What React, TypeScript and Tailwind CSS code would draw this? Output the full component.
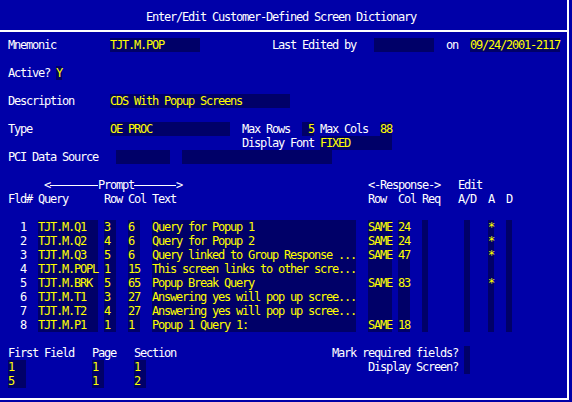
import type { ReactNode } from 'react';
import clsx from 'clsx';

type CellProps = { className?: string; children?: ReactNode };

// plain label text on the screen background
function Lbl({ className, children }: CellProps) {
  return <div className={clsx('text-white', className)}>{children}</div>;
}

// input field: dark cell with yellow value
function Fld({ className, children }: CellProps) {
  return <div className={clsx('bg-[#000068] text-[#ffff00]', className)}>{children}</div>;
}

type Row = {
  n: string;
  q: string;
  r: string;
  c: string;
  t: string;
  rr: string;
  rc: string;
  a: boolean;
};

const rows: Row[] = [
  { n: '1', q: 'TJT.M.Q1', r: '3', c: '6', t: 'Query for Popup 1', rr: 'SAME', rc: '24', a: true },
  { n: '2', q: 'TJT.M.Q2', r: '4', c: '6', t: 'Query for Popup 2', rr: 'SAME', rc: '24', a: true },
  { n: '3', q: 'TJT.M.Q3', r: '5', c: '6', t: 'Query linked to Group Response ...', rr: 'SAME', rc: '47', a: true },
  { n: '4', q: 'TJT.M.POPL', r: '1', c: '15', t: 'This screen links to other scre...', rr: '', rc: '', a: false },
  { n: '5', q: 'TJT.M.BRK', r: '5', c: '65', t: 'Popup Break Query', rr: 'SAME', rc: '83', a: true },
  { n: '6', q: 'TJT.M.T1', r: '3', c: '27', t: 'Answering yes will pop up scree...', rr: '', rc: '', a: false },
  { n: '7', q: 'TJT.M.T2', r: '4', c: '27', t: 'Answering yes will pop up scree...', rr: '', rc: '', a: false },
  { n: '8', q: 'TJT.M.P1', r: '1', c: '1', t: 'Popup 1 Query 1:', rr: 'SAME', rc: '18', a: false },
];

const rowStart = [
  'row-start-16',
  'row-start-17',
  'row-start-18',
  'row-start-19',
  'row-start-20',
  'row-start-21',
  'row-start-22',
  'row-start-23',
];

export default function App() {
  return (
    <div className="w-[572px] h-[402px] bg-[#0000a8] overflow-hidden">
      <div className="w-[569px] h-[400px] border-r-2 border-b-2 border-white pt-[10px] pl-[2px] font-['DejaVu_Sans_Mono',monospace] text-[12px] leading-[14px] tracking-[-1.224px] whitespace-pre">
        <div className="grid grid-cols-[repeat(94,6px)] grid-rows-[repeat(27,14px)]">
          {/* header */}
          <Lbl className="row-start-1 col-start-25">Enter/Edit Customer-Defined Screen Dictionary</Lbl>
          <div className="row-start-2 col-span-full self-center h-[2px] w-[567px] -ml-[2px] bg-white" />

          <Lbl className="row-start-3 col-start-2">Mnemonic</Lbl>
          <Fld className="row-start-3 col-start-19 col-span-15">TJT.M.POP</Fld>
          <Lbl className="row-start-3 col-start-46">Last Edited by</Lbl>
          <Fld className="row-start-3 col-start-63 col-span-10" />
          <Lbl className="row-start-3 col-start-75">on</Lbl>
          <Fld className="row-start-3 col-start-79 col-span-15">09/24/2001-2117</Fld>

          <Lbl className="row-start-5 col-start-2">Active?</Lbl>
          <Fld className="row-start-5 col-start-10">Y</Fld>

          <Lbl className="row-start-7 col-start-2">Description</Lbl>
          <Fld className="row-start-7 col-start-19 col-span-30">CDS With Popup Screens</Fld>

          <Lbl className="row-start-9 col-start-2">Type</Lbl>
          <Fld className="row-start-9 col-start-19 col-span-20">OE PROC</Fld>
          <Lbl className="row-start-9 col-start-41">Max Rows</Lbl>
          <Fld className="row-start-9 col-start-51 col-span-2"> 5</Fld>
          <Lbl className="row-start-9 col-start-54">Max Cols</Lbl>
          <Fld className="row-start-9 col-start-64 col-span-2">88</Fld>
          <Lbl className="row-start-10 col-start-41">Display Font</Lbl>
          <Fld className="row-start-10 col-start-54 col-span-12">FIXED</Fld>

          <Lbl className="row-start-11 col-start-2">PCI Data Source</Lbl>
          <Fld className="row-start-11 col-start-20 col-span-9" />
          <Fld className="row-start-11 col-start-31 col-span-25" />

          {/* column headings */}
          <Lbl className="row-start-13 col-start-8">&lt;</Lbl>
          <div className="row-start-13 col-start-9 col-span-8 self-center h-px bg-white" />
          <Lbl className="row-start-13 col-start-17">Prompt</Lbl>
          <div className="row-start-13 col-start-23 col-span-7 self-center h-px bg-white" />
          <Lbl className="row-start-13 col-start-30">&gt;</Lbl>
          <Lbl className="row-start-13 col-start-62">&lt;-Response-&gt;</Lbl>
          <Lbl className="row-start-13 col-start-77">Edit</Lbl>

          <Lbl className="row-start-14 col-start-2">Fld#</Lbl>
          <Lbl className="row-start-14 col-start-7">Query</Lbl>
          <Lbl className="row-start-14 col-start-18">Row</Lbl>
          <Lbl className="row-start-14 col-start-22">Col</Lbl>
          <Lbl className="row-start-14 col-start-26">Text</Lbl>
          <Lbl className="row-start-14 col-start-62">Row</Lbl>
          <Lbl className="row-start-14 col-start-67">Col</Lbl>
          <Lbl className="row-start-14 col-start-71">Req</Lbl>
          <Lbl className="row-start-14 col-start-77">A/D</Lbl>
          <Lbl className="row-start-14 col-start-82">A</Lbl>
          <Lbl className="row-start-14 col-start-85">D</Lbl>

          {rows.map((f, i) => {
            const rs = rowStart[i];
            return (
              <div key={f.n} className="contents">
                <Lbl className={clsx(rs, 'col-start-4')}>{f.n}</Lbl>
                <Fld className={clsx(rs, 'col-start-7 col-span-10')}>{f.q}</Fld>
                <Fld className={clsx(rs, 'col-start-18 col-span-2')}>{f.r}</Fld>
                <Fld className={clsx(rs, 'col-start-22 col-span-2')}>{f.c}</Fld>
                <Fld className={clsx(rs, 'col-start-26 col-span-34')}>{f.t}</Fld>
                <Fld className={clsx(rs, 'col-start-62 col-span-4')}>{f.rr}</Fld>
                <Fld className={clsx(rs, 'col-start-67 col-span-2')}>{f.rc}</Fld>
                <Fld className={clsx(rs, 'col-start-71')} />
                <Fld className={clsx(rs, 'col-start-78')} />
                <Fld className={clsx(rs, 'col-start-82')}>{f.a ? '*' : ''}</Fld>
                <Fld className={clsx(rs, 'col-start-85')} />
              </div>
            );
          })}

          {/* footer */}
          <Lbl className="row-start-25 col-start-2">First Field</Lbl>
          <Lbl className="row-start-25 col-start-16">Page</Lbl>
          <Lbl className="row-start-25 col-start-23">Section</Lbl>
          <Lbl className="row-start-25 col-start-56">Mark required fields?</Lbl>
          <Fld className="row-start-25 row-span-2 col-start-78" />

          <Fld className="row-start-26 col-start-2 col-span-3">1</Fld>
          <Fld className="row-start-26 col-start-16 col-span-2">1</Fld>
          <Fld className="row-start-26 col-start-23 col-span-2">1</Fld>
          <Lbl className="row-start-26 col-start-62">Display Screen?</Lbl>

          <Fld className="row-start-27 col-start-2 col-span-3">5</Fld>
          <Fld className="row-start-27 col-start-16 col-span-2">1</Fld>
          <Fld className="row-start-27 col-start-23 col-span-2">2</Fld>
        </div>
      </div>
    </div>
  );
}
